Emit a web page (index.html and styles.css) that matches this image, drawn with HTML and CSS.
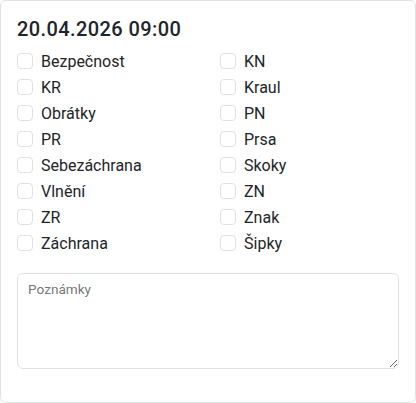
FILE: index.html
```html
<!DOCTYPE html>
<html lang="cs">
<head>
  <meta charset="UTF-8" />
  <meta name="viewport" content="width=device-width, initial-scale=1" />
  <title>Trénink</title>
  <link rel="stylesheet" href="styles.css">
</head>
<body>

  <div class="card">
    <h5 class="card-title">20.04.2026 09:00</h5>

    <div class="checks">
      <label class="check"><input type="checkbox" /> Bezpečnost</label>
      <label class="check"><input type="checkbox" /> KN</label>
      <label class="check"><input type="checkbox" /> KR</label>
      <label class="check"><input type="checkbox" /> Kraul</label>
      <label class="check"><input type="checkbox" /> Obrátky</label>
      <label class="check"><input type="checkbox" /> PN</label>
      <label class="check"><input type="checkbox" /> PR</label>
      <label class="check"><input type="checkbox" /> Prsa</label>
      <label class="check"><input type="checkbox" /> Sebezáchrana</label>
      <label class="check"><input type="checkbox" /> Skoky</label>
      <label class="check"><input type="checkbox" /> Vlnění</label>
      <label class="check"><input type="checkbox" /> ZN</label>
      <label class="check"><input type="checkbox" /> ZR</label>
      <label class="check"><input type="checkbox" /> Znak</label>
      <label class="check"><input type="checkbox" /> Záchrana</label>
      <label class="check"><input type="checkbox" /> Šipky</label>
    </div>

    <div class="notes">
      <textarea id="notes" placeholder=" "></textarea>
      <label for="notes" class="notes-label">Poznámky</label>
    </div>
  </div>

</body>
</html>
```

FILE: styles.css
```css
body {
  margin: 0;
  font-family: Roboto, "Liberation Sans", sans-serif;
  color: #212529;
  background: #fff;
}
.card {
  width: 416px;
  height: 403px;
  box-sizing: border-box;
  border: 1px solid #dee2e6;
  border-radius: 6px;
  padding: 16px;
}
.card-title {
  margin: 0 0 8px;
  font-size: 20px;
  font-weight: 500;
  line-height: 24px;
  letter-spacing: 0.4px;
}
.checks {
  display: grid;
  grid-template-columns: 203px 1fr;
}
.check {
  display: flex;
  align-items: center;
  gap: 8px;
  height: 24px;
  margin-bottom: 2px;
  font-size: 16px;
}
.check input {
  appearance: none;
  width: 16px;
  height: 16px;
  margin: 0;
  border: 1px solid #dee2e6;
  border-radius: 4px;
  background: #fff;
}
.check input:checked {
  background: #0d6efd;
  border-color: #0d6efd;
}
.notes {
  position: relative;
  margin-top: 16px;
}
.notes textarea {
  display: block;
  width: 100%;
  height: 96px;
  box-sizing: border-box;
  border: 1px solid #dee2e6;
  border-radius: 6px;
  padding: 26px 12px 8px;
  font: inherit;
  color: #212529;
}
.notes-label {
  position: absolute;
  top: 8px;
  left: 11px;
  font-size: 13.6px;
  color: rgba(33, 37, 41, 0.65);
  pointer-events: none;
}
```
